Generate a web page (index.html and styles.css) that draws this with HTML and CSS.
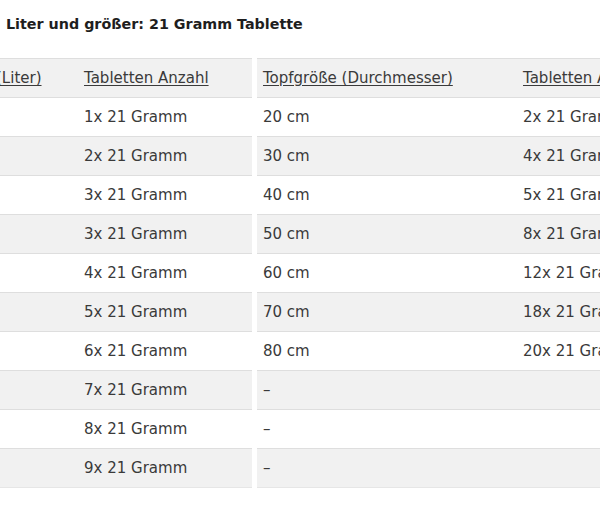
FILE: index.html
```html
<!DOCTYPE html>
<html lang="de">
<head>
<meta charset="utf-8">
<title>Tabletten</title>
<link rel="stylesheet" href="styles.css">
</head>
<body>
<h3 class="title">Liter und größer: 21 Gramm Tablette</h3>
<div class="tables">
  <table class="dose dose-a">
    <thead>
      <tr><th class="c1"><a href="#">(Liter)</a></th><th class="c2"><a href="#">Tabletten Anzahl</a></th></tr>
    </thead>
    <tbody>
      <tr><td></td><td>1x 21 Gramm</td></tr>
      <tr><td></td><td>2x 21 Gramm</td></tr>
      <tr><td></td><td>3x 21 Gramm</td></tr>
      <tr><td></td><td>3x 21 Gramm</td></tr>
      <tr><td></td><td>4x 21 Gramm</td></tr>
      <tr><td></td><td>5x 21 Gramm</td></tr>
      <tr><td></td><td>6x 21 Gramm</td></tr>
      <tr><td></td><td>7x 21 Gramm</td></tr>
      <tr><td></td><td>8x 21 Gramm</td></tr>
      <tr><td></td><td>9x 21 Gramm</td></tr>
    </tbody>
  </table>
  <table class="dose dose-b">
    <thead>
      <tr><th class="c3"><a href="#">Topfgröße (Durchmesser)</a></th><th class="c4"><a href="#">Tabletten Anzahl</a></th></tr>
    </thead>
    <tbody>
      <tr><td>20 cm</td><td>2x 21 Gramm</td></tr>
      <tr><td>30 cm</td><td>4x 21 Gramm</td></tr>
      <tr><td>40 cm</td><td>5x 21 Gramm</td></tr>
      <tr><td>50 cm</td><td>8x 21 Gramm</td></tr>
      <tr><td>60 cm</td><td>12x 21 Gramm</td></tr>
      <tr><td>70 cm</td><td>18x 21 Gramm</td></tr>
      <tr><td>80 cm</td><td>20x 21 Gramm</td></tr>
      <tr><td>–</td><td></td></tr>
      <tr><td>–</td><td></td></tr>
      <tr><td>–</td><td></td></tr>
    </tbody>
  </table>
</div>
</body>
</html>
```

FILE: styles.css
```css
html, body {
  margin: 0;
  padding: 0;
  overflow: hidden;
  background: #ffffff;
}

body {
  width: 600px;
  height: 527px;
  font-family: "DejaVu Sans", "Liberation Sans", sans-serif;
  color: #3a3a3a;
}

.title {
  margin: 0;
  padding: 14px 0 0 6px;
  height: 20px;
  font-size: 14.3px;
  line-height: 20px;
  font-weight: bold;
  color: #1e1e1e;
  white-space: nowrap;
}

.tables {
  display: flex;
  gap: 5px;
  margin: 24px 0 0 -10px;
  width: 900px;
}

.dose {
  border-collapse: collapse;
  table-layout: fixed;
  font-size: 15px;
  flex: none;
}

.dose-a { width: 262px; }
.dose-b { width: 460px; }

.c1 { width: 88px; }
.c2 { width: 174px; }
.c3 { width: 260px; }
.c4 { width: 200px; }

.dose th,
.dose td {
  box-sizing: border-box;
  height: 39px;
  padding: 0 6px;
  border-top: 1px solid #dedede;
  text-align: left;
  font-weight: normal;
  white-space: nowrap;
  overflow: hidden;
  vertical-align: middle;
}

.dose tbody tr:last-child td {
  border-bottom: 1px solid #e6e6e6;
}

.dose th a {
  color: #3a3a3a;
  text-decoration: underline;
  text-underline-offset: 2px;
}

.dose thead tr,
.dose tbody tr:nth-child(even) {
  background: #f1f1f1;
}
```
